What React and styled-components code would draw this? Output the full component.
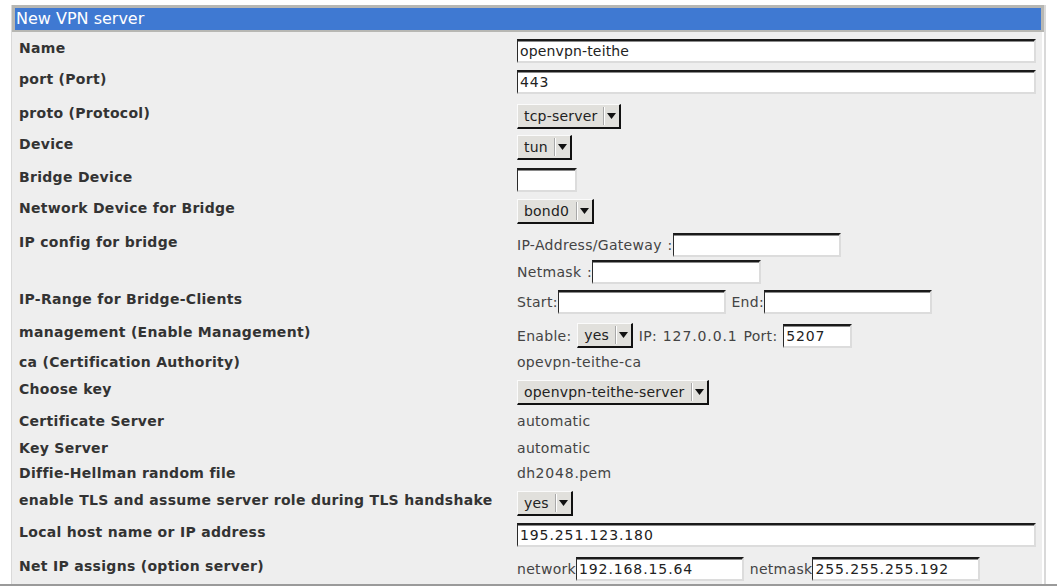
import React from 'react';
import styled, { createGlobalStyle } from 'styled-components';

const GlobalStyle = createGlobalStyle`
  html, body {
    margin: 0;
    padding: 0;
    background: #ffffff;
    font-family: "DejaVu Sans", Verdana, sans-serif;
    font-size: 14px;
  }
`;

const Page = styled.div`
  width: 1057px;
  height: 586px;
  box-sizing: border-box;
  padding-top: 5px;
  border-bottom: 2px solid #9a9a9a;
  overflow: hidden;
`;

const Frame = styled.div`
  margin-left: 11px;
  width: 1035px;
  height: 100%;
  box-sizing: border-box;
  border-left: 1px solid #d9d9d9;
  border-right: 2px solid #d9d9d9;
  background: #ffffff;
`;

const Header = styled.div`
  border: 3px solid #b7b7b3;
  border-bottom-width: 2px;
  background: #3f79d2;
  color: #ffffff;
  height: 22px;
  line-height: 22px;
  padding-left: 1px;
  font-size: 16px;
`;

const Body = styled.div`
  background: #eeeeee;
  margin-right: 2px;
  padding: 7px 0 10px 7px;
  height: 100%;
`;

const Row = styled.div`
  display: grid;
  grid-template-columns: 498px 1fr;
  align-items: start;
  padding: 0 0 ${(p) => 7 + (p.$extra || 0)}px;
`;

const Label = styled.div`
  font-weight: bold;
  color: #333333;
  line-height: 18px;
  letter-spacing: 0.3px;
`;

const Cell = styled.div`
  display: flex;
  flex-direction: column;
  gap: 3px;
  color: #444444;
  padding-right: 6px;
  letter-spacing: 0.3px;
  word-spacing: 1px;
`;

const Line = styled.div`
  display: flex;
  align-items: center;
  white-space: pre;
  line-height: 20px;
`;

const Num = styled.span`
  letter-spacing: 0.9px;
`;

const Input = styled.div`
  box-sizing: border-box;
  height: 24px;
  width: ${(p) => (p.$width ? `${p.$width}px` : '100%')};
  background: #ffffff;
  border-style: solid;
  border-width: 2px 2px 2px 1px;
  border-color: #1a1a1a #dcdcdc #dcdcdc #2a2a2a;
  box-shadow: inset 0 1px 0 #8a8a8a;
  color: #222222;
  padding-left: 2px;
  line-height: 20px;
  font-size: 14px;
  letter-spacing: 0.15px;
  white-space: nowrap;
  overflow: hidden;
`;

const SelectBox = styled.div`
  box-sizing: border-box;
  display: inline-flex;
  align-items: stretch;
  height: 25px;
  background: #e1e0dc;
  border-style: solid;
  border-width: 1px 2px 2px 1px;
  border-color: #fbfbfb #111111 #111111 #fbfbfb;
  color: #222222;
  letter-spacing: 0.2px;
`;

const SelectText = styled.span`
  padding: 0 6px;
  line-height: 22px;
`;

const SelectArrow = styled.span`
  width: 15px;
  display: flex;
  align-items: center;
  justify-content: center;
  border-left: 1px solid #a8a8a8;
  box-shadow: inset 1px 0 0 #ffffff;
  margin: 2px 0;
`;

const Triangle = () => (
  <svg width="9" height="6" viewBox="0 0 9 6">
    <path d="M0 0 H9 L4.5 6 Z" fill="#111111" />
  </svg>
);

const Select = ({ children }) => (
  <SelectBox>
    <SelectText>{children}</SelectText>
    <SelectArrow>
      <Triangle />
    </SelectArrow>
  </SelectBox>
);

const Value = styled.div`
  line-height: 18px;
  color: #444444;
`;

export default function App() {
  return (
    <>
      <GlobalStyle />
      <Page>
        <Frame>
          <Header>New VPN server</Header>
          <Body>
            <Row>
              <Label>Name</Label>
              <Cell><Input>openvpn-teithe</Input></Cell>
            </Row>
            <Row $extra={3}>
              <Label>port (Port)</Label>
              <Cell><Input><Num>443</Num></Input></Cell>
            </Row>
            <Row $extra={-1}>
              <Label>proto (Protocol)</Label>
              <Cell><Line><Select>tcp-server</Select></Line></Cell>
            </Row>
            <Row $extra={1}>
              <Label>Device</Label>
              <Cell><Line><Select>tun</Select></Line></Cell>
            </Row>
            <Row>
              <Label>Bridge Device</Label>
              <Cell><Input $width={60} /></Cell>
            </Row>
            <Row $extra={2}>
              <Label>Network Device for Bridge</Label>
              <Cell><Line><Select>bond<Num>0</Num></Select></Line></Cell>
            </Row>
            <Row $extra={-1}>
              <Label>IP config for bridge</Label>
              <Cell>
                <Line>IP-Address/Gateway :<Input $width={168} /></Line>
                <Line>Netmask :<Input $width={169} /></Line>
              </Cell>
            </Row>
            <Row $extra={2}>
              <Label>IP-Range for Bridge-Clients</Label>
              <Cell>
                <Line>Start:<Input $width={168} /> End:<Input $width={168} /></Line>
              </Cell>
            </Row>
            <Row $extra={-2}>
              <Label>management (Enable Management)</Label>
              <Cell>
                <Line>Enable: <Select>yes</Select> IP: <Num>127.0.0.1</Num> Port: <Input $width={69}><Num>5207</Num></Input></Line>
              </Cell>
            </Row>
            <Row $extra={2}>
              <Label>ca (Certification Authority)</Label>
              <Cell><Value>opevpn-teithe-ca</Value></Cell>
            </Row>
            <Row>
              <Label>Choose key</Label>
              <Cell><Line><Select>openvpn-teithe-server</Select></Line></Cell>
            </Row>
            <Row $extra={2}>
              <Label>Certificate Server</Label>
              <Cell><Value>automatic</Value></Cell>
            </Row>
            <Row>
              <Label>Key Server</Label>
              <Cell><Value>automatic</Value></Cell>
            </Row>
            <Row $extra={2}>
              <Label>Diffie-Hellman random file</Label>
              <Cell><Value>dh<Num>2048</Num>.pem</Value></Cell>
            </Row>
            <Row>
              <Label>enable TLS and assume server role during TLS handshake</Label>
              <Cell><Line><Select>yes</Select></Line></Cell>
            </Row>
            <Row $extra={3}>
              <Label>Local host name or IP address</Label>
              <Cell><Input><Num>195.251.123.180</Num></Input></Cell>
            </Row>
            <Row>
              <Label>Net IP assigns (option server)</Label>
              <Cell>
                <Line>network<Input $width={168}><Num>192.168.15.64</Num></Input> netmask<Input $width={168}><Num>255.255.255.192</Num></Input></Line>
              </Cell>
            </Row>
          </Body>
        </Frame>
      </Page>
    </>
  );
}
